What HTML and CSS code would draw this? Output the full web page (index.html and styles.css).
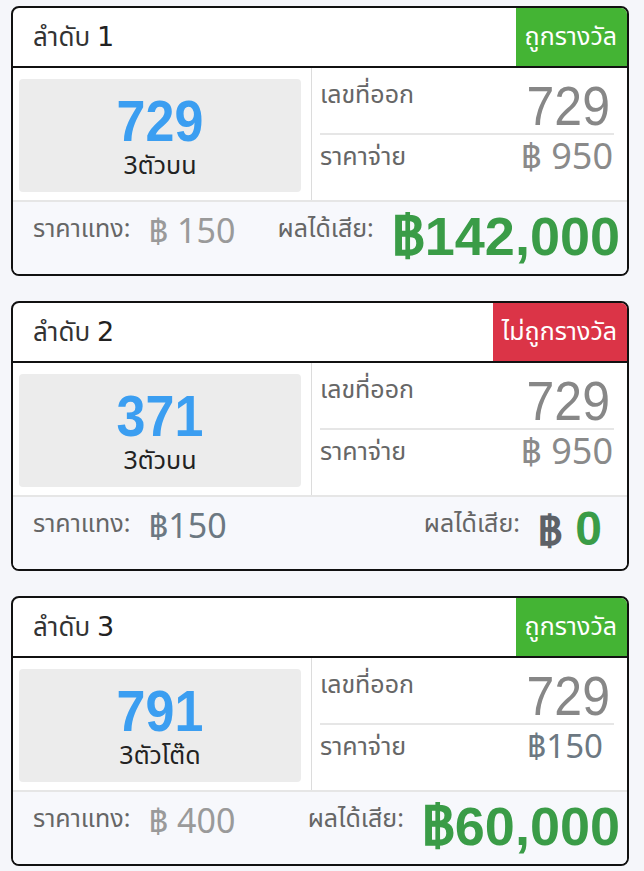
FILE: index.html
```html
<!DOCTYPE html>
<html lang="th">
<head>
  <meta charset="UTF-8" />
  <meta name="viewport" content="width=device-width, initial-scale=1" />
  <title>ผลการแทง</title>
  <link rel="stylesheet" href="styles.css">
</head>
<body>
  <div class="card">
    <div class="card-head">
      <div class="rank">ลำดับ <span class="rank-num">1</span></div>
      <div class="badge win">ถูกรางวัล</div>
    </div>
    <div class="card-body">
      <div class="pick">
        <div class="pick-num">729</div>
        <div class="pick-type">3ตัวบน</div>
      </div>
      <div class="result">
        <div class="row">
          <span class="label">เลขที่ออก</span>
          <span class="big-val">729</span>
        </div>
        <div class="row">
          <span class="label">ราคาจ่าย</span>
          <span class="pay-val">฿ 950</span>
        </div>
      </div>
    </div>
    <div class="card-foot">
      <div class="stake"><span class="label">ราคาแทง:</span><span class="stake-val">฿ 150</span></div>
      <div class="profit"><span class="label">ผลได้เสีย:</span><span class="profit-val">฿142,000</span></div>
    </div>
  </div>

  <div class="card">
    <div class="card-head">
      <div class="rank">ลำดับ <span class="rank-num">2</span></div>
      <div class="badge lose">ไม่ถูกรางวัล</div>
    </div>
    <div class="card-body">
      <div class="pick">
        <div class="pick-num">371</div>
        <div class="pick-type">3ตัวบน</div>
      </div>
      <div class="result">
        <div class="row">
          <span class="label">เลขที่ออก</span>
          <span class="big-val">729</span>
        </div>
        <div class="row">
          <span class="label">ราคาจ่าย</span>
          <span class="pay-val">฿ 950</span>
        </div>
      </div>
    </div>
    <div class="card-foot">
      <div class="stake"><span class="label">ราคาแทง:</span><span class="stake-val dark">฿150</span></div>
      <div class="profit"><span class="label">ผลได้เสีย:</span><span class="profit-val zero"><span class="baht-gray">฿</span> 0</span></div>
    </div>
  </div>

  <div class="card">
    <div class="card-head">
      <div class="rank">ลำดับ <span class="rank-num">3</span></div>
      <div class="badge win">ถูกรางวัล</div>
    </div>
    <div class="card-body">
      <div class="pick">
        <div class="pick-num">791</div>
        <div class="pick-type">3ตัวโต๊ด</div>
      </div>
      <div class="result">
        <div class="row">
          <span class="label">เลขที่ออก</span>
          <span class="big-val">729</span>
        </div>
        <div class="row">
          <span class="label">ราคาจ่าย</span>
          <span class="pay-val dark">฿150</span>
        </div>
      </div>
    </div>
    <div class="card-foot">
      <div class="stake"><span class="label">ราคาแทง:</span><span class="stake-val">฿ 400</span></div>
      <div class="profit"><span class="label">ผลได้เสีย:</span><span class="profit-val">฿60,000</span></div>
    </div>
  </div>
</body>
</html>
```

FILE: styles.css
```css
:root {
  --page: #f5f6fa;
  --foot: #f7f8fc;
  --line: #dcdcdc;
  --blue: #3b9ef1;
  --green: #3a9c47;
  --badge-green: #44b434;
  --badge-red: #db3447;
  --muted: #666;
}
* {
  margin: 0;
  padding: 0;
  box-sizing: border-box;
}
body {
  font-family: "Noto Sans Thai", "Leelawadee UI", Tahoma, "Noto Sans", sans-serif;
  background: var(--page);
  padding: 6px 15px 0 11px;
  color: #333;
}
.card {
  background: #fff;
  border: 2px solid #111;
  border-radius: 8px;
  overflow: hidden;
  margin-bottom: 25px;
}
.card-head {
  display: flex;
  justify-content: space-between;
  height: 60px;
  border-bottom: 2px solid #111;
}
.rank {
  padding: 10px 0 0 20px;
  font-size: 26px;
  color: #333;
}
.rank-num {
  font-family: "DejaVu Sans", sans-serif;
  font-size: 27px;
  color: #222;
}
.badge {
  color: #fff;
  font-size: 25px;
  padding: 10px 10px 0 9px;
}
.badge.win {
  background: var(--badge-green);
}
.badge.lose {
  background: var(--badge-red);
}
.card-body {
  display: grid;
  grid-template-columns: 298px 1fr;
  height: 132px;
}
.pick {
  margin: 11px 10px 8px 6px;
  background: #ececec;
  border-radius: 4px;
  text-align: center;
  padding-top: 19px;
}
.pick-num {
  font-family: "Liberation Sans", Arial, sans-serif;
  font-weight: bold;
  font-size: 52px;
  line-height: 46px;
  color: var(--blue);
  transform: scaleY(1.12);
}
.pick-type {
  font-size: 25px;
  color: #222;
  line-height: 28px;
  margin-top: 8px;
}
.result {
  border-left: 1px solid var(--line);
  padding: 0 13px 0 8px;
  display: flex;
  flex-direction: column;
}
.row {
  height: 65px;
  display: flex;
  justify-content: space-between;
  align-items: flex-start;
}
.row + .row {
  height: 67px;
  border-top: 2px solid #e6e6e6;
}
.label {
  font-size: 25px;
  color: var(--muted);
  padding-top: 8px;
}
.row + .row .label {
  padding-top: 3px;
}
.big-val {
  font-family: "Liberation Sans", Arial, sans-serif;
  font-size: 50px;
  color: #878787;
  line-height: 56px;
  padding: 9px 4px 0 0;
  transform: scaleY(1.12);
}
.pay-val {
  font-size: 36px;
  color: #8a8a8a;
  line-height: 46px;
  padding-right: 1px;
}
.pay-val.dark {
  color: #6c7882;
  font-size: 33px;
  padding-right: 11px;
}
.card-foot {
  height: 74px;
  background: var(--foot);
  border-top: 2px solid #e6e6e6;
  display: flex;
  justify-content: space-between;
  padding: 0 7px 0 20px;
}
.stake, .profit {
  display: flex;
  align-items: flex-start;
  gap: 18px;
}
.stake-val {
  font-size: 34px;
  color: #9a9a9a;
  line-height: 62px;
}
.stake-val.dark {
  color: #6c7882;
}
.profit-val {
  font-family: "Liberation Sans", Arial, sans-serif;
  font-weight: bold;
  font-size: 54px;
  line-height: 68px;
  color: var(--green);
}
.profit-val.zero {
  font-size: 48px;
  line-height: 64px;
  margin-right: 18px;
}
.baht-gray {
  color: #5d6167;
  font-size: 40px;
}
```
